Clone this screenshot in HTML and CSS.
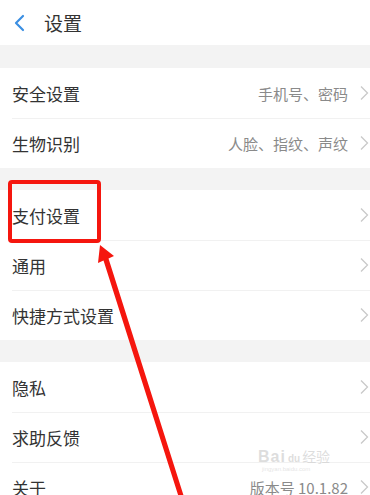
FILE: index.html
```html
<!DOCTYPE html>
<html lang="zh">
<head>
<meta charset="utf-8">
<link rel="stylesheet" href="styles.css">
</head>
<body>
<div class="page">
  <header class="top">
    <svg class="back" width="12" height="18" viewBox="0 0 12 18"><path d="M10 2 L3 9 L10 16" fill="none" stroke="#3b8fe2" stroke-width="2.2" stroke-linecap="round" stroke-linejoin="round"/></svg>
    <span class="title">设置</span>
  </header>

  <section class="group g1">
    <div class="row"><span class="label">安全设置</span><span class="value">手机号、密码</span><svg class="chev" viewBox="0 0 10 16"><path d="M2 1.5 L8.5 8 L2 14.5" fill="none" stroke="#c9c9c9" stroke-width="1.3"/></svg></div>
    <div class="row"><span class="label">生物识别</span><span class="value">人脸、指纹、声纹</span><svg class="chev" viewBox="0 0 10 16"><path d="M2 1.5 L8.5 8 L2 14.5" fill="none" stroke="#c9c9c9" stroke-width="1.3"/></svg></div>
  </section>

  <section class="group">
    <div class="row"><span class="label">支付设置</span><span class="value"></span><svg class="chev" viewBox="0 0 10 16"><path d="M2 1.5 L8.5 8 L2 14.5" fill="none" stroke="#c9c9c9" stroke-width="1.3"/></svg></div>
    <div class="row"><span class="label">通用</span><span class="value"></span><svg class="chev" viewBox="0 0 10 16"><path d="M2 1.5 L8.5 8 L2 14.5" fill="none" stroke="#c9c9c9" stroke-width="1.3"/></svg></div>
    <div class="row"><span class="label">快捷方式设置</span><span class="value"></span><svg class="chev" viewBox="0 0 10 16"><path d="M2 1.5 L8.5 8 L2 14.5" fill="none" stroke="#c9c9c9" stroke-width="1.3"/></svg></div>
  </section>

  <section class="group">
    <div class="row"><span class="label">隐私</span><span class="value"></span><svg class="chev" viewBox="0 0 10 16"><path d="M2 1.5 L8.5 8 L2 14.5" fill="none" stroke="#c9c9c9" stroke-width="1.3"/></svg></div>
    <div class="row"><span class="label">求助反馈</span><span class="value"></span><svg class="chev" viewBox="0 0 10 16"><path d="M2 1.5 L8.5 8 L2 14.5" fill="none" stroke="#c9c9c9" stroke-width="1.3"/></svg></div>
    <div class="row"><span class="label">关于</span><span class="value">版本号 10.1.82</span><svg class="chev" viewBox="0 0 10 16"><path d="M2 1.5 L8.5 8 L2 14.5" fill="none" stroke="#c9c9c9" stroke-width="1.3"/></svg></div>
  </section>

  <div class="watermark"><span class="wm-bai">Bai</span><span class="wm-paw">du</span><span class="wm-jy">经验</span></div>
  <div class="watermark-sub">jingyan.baidu.com</div>

  <div class="redbox"></div>
  <svg class="arrow" width="370" height="495" viewBox="0 0 370 495">
    <polygon points="100,245 114,256 108.5,258.5 185,500 180,501 103.5,260.5 98,263" fill="#f5160e"/>
  </svg>
</div>
</body>
</html>
```

FILE: styles.css
```css
* { box-sizing: border-box; }
html, body { margin: 0; padding: 0; }
body {
  width: 370px;
  height: 495px;
  overflow: hidden;
  background: #f3f3f3;
  font-family: "Noto Sans CJK SC", "Noto Sans", sans-serif;
  color: #333;
}
.page { position: relative; width: 370px; height: 495px; overflow: hidden; }
.top {
  height: 45px;
  background: #fff;
  display: flex;
  align-items: center;
  padding-left: 13px;
  gap: 19px;
}
.back { display: block; margin-top: 1px; }
.title { font-size: 19px; color: #333; line-height: 1; }
.group { background: #fff; margin-top: 22px; }
.g1 { margin-top: 23px; }
.row {
  height: 50px;
  display: flex;
  align-items: center;
  padding-left: 12px;
  position: relative;
}
.row + .row::before {
  content: "";
  position: absolute;
  left: 12px;
  right: 0;
  top: 0;
  height: 1px;
  background: #f1f1f1;
}
.label { font-size: 17px; color: #333; flex: 1; line-height: 1; }
.value { font-size: 15px; color: #8a8a8a; line-height: 1; margin-right: 11px; }
.chev { width: 10px; height: 16px; display: block; margin-right: 1px; }
.redbox {
  position: absolute;
  left: 8px;
  top: 180px;
  width: 93px;
  height: 63px;
  border: 4px solid #f5160e;
  border-radius: 4px;
}
.arrow { position: absolute; left: 0; top: 0; }
.watermark {
  position: absolute;
  left: 258px;
  top: 446px;
  display: flex;
  align-items: baseline;
  gap: 2px;
  color: rgba(210, 210, 210, 0.75);
  font-family: "Liberation Sans", sans-serif;
}
.wm-bai { font-size: 16px; font-weight: bold; letter-spacing: 1px; }
.wm-paw { font-size: 10px; font-weight: bold; }
.wm-jy { font-size: 14px; font-family: "Noto Sans CJK SC", sans-serif; }
.watermark-sub {
  position: absolute;
  left: 262px;
  top: 466px;
  font-size: 6px;
  color: rgba(215, 215, 215, 0.7);
  font-family: "Liberation Sans", sans-serif;
}
```
